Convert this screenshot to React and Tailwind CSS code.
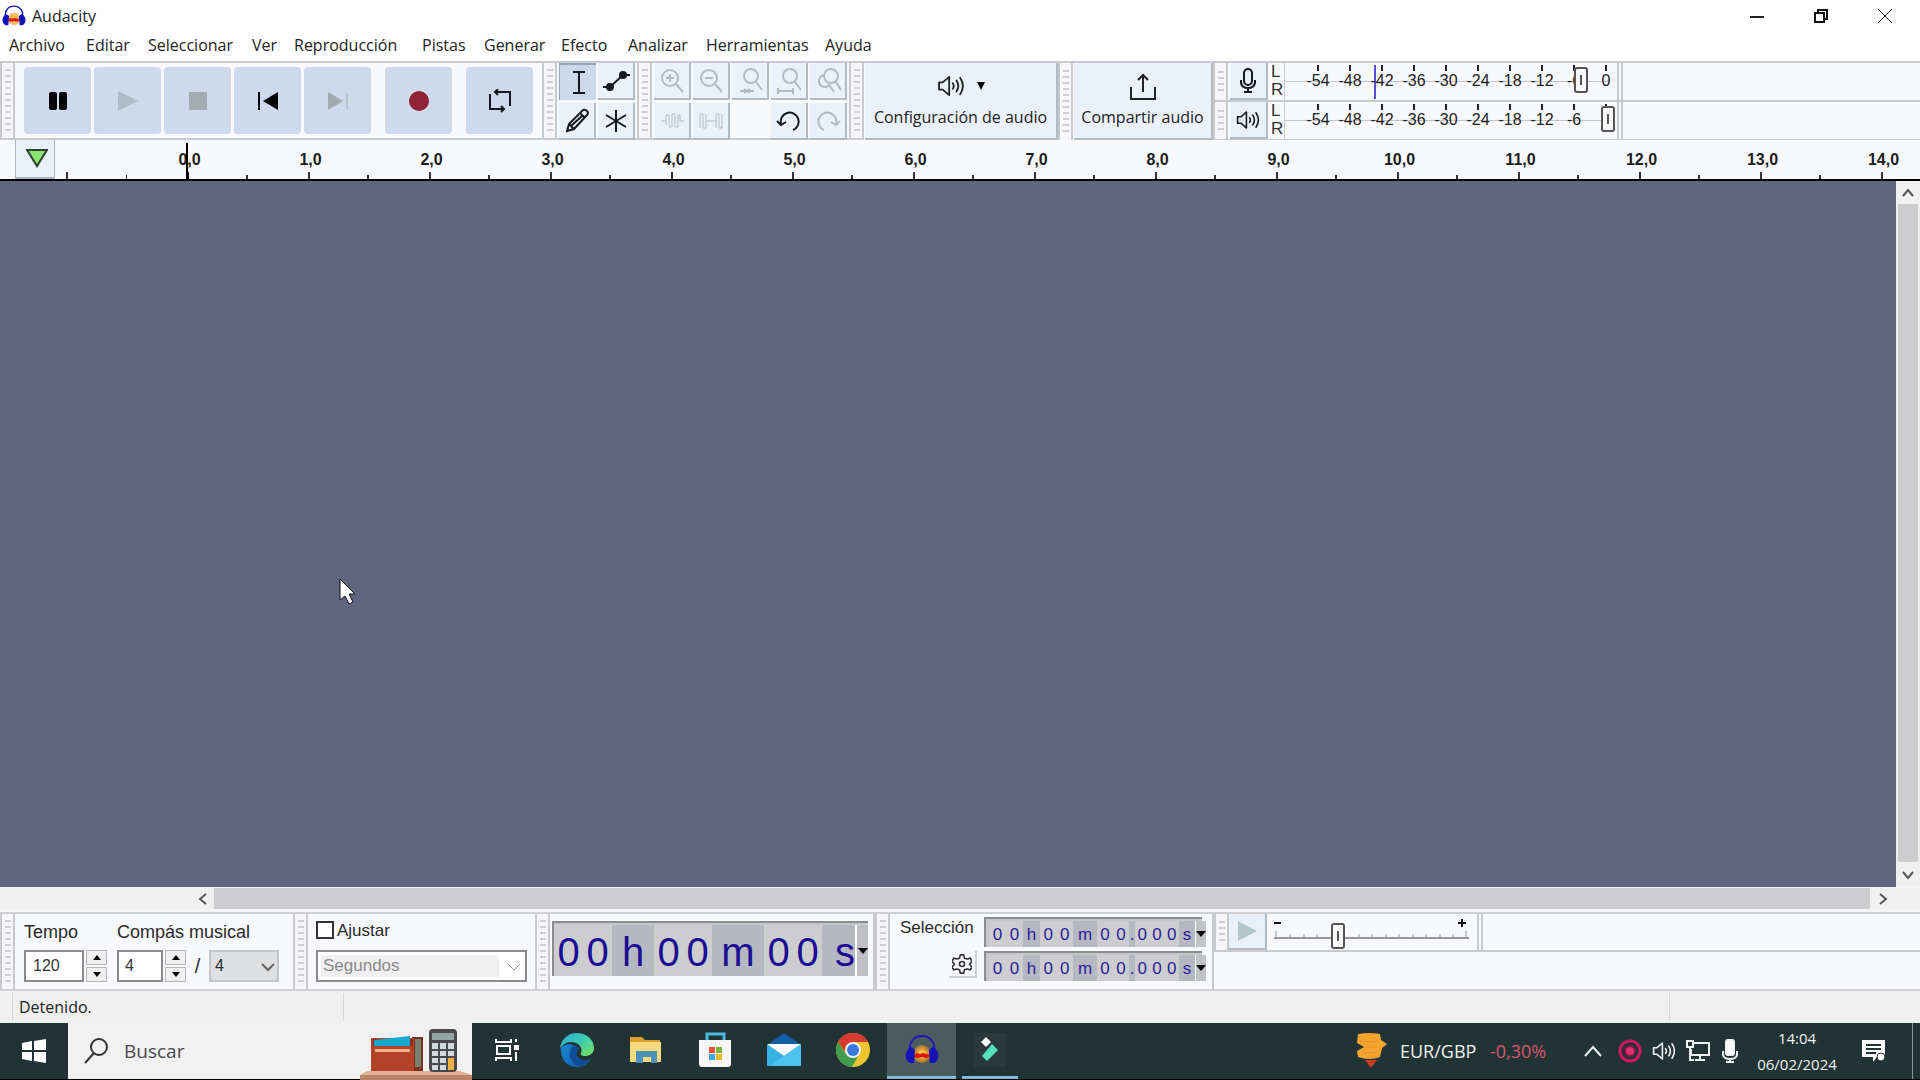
const SANS = "font-['Open_Sans','Noto_Sans',sans-serif]";

function Grip({ short }) {
  return (
    <div className="flex w-[15px] shrink-0 items-center justify-center self-stretch border-x-2 border-[#c9cacd] bg-[#f6f6f8]">
      <svg className={short ? "h-[26px] w-[6px]" : "h-[68px] w-[6px]"} aria-hidden="true">
        <defs>
          <pattern id={short ? "gs" : "gl"} width="6" height="6" patternUnits="userSpaceOnUse">
            <rect y="2" width="6" height="2" fill="#cfcfd2" />
          </pattern>
        </defs>
        <rect width="6" height="68" fill={short ? "url(#gs)" : "url(#gl)"} />
      </svg>
    </div>
  );
}

function Headphones({ className }) {
  return (
    <svg viewBox="0 0 34 32" className={className} aria-hidden="true">
      <defs>
        <radialGradient id="glow"><stop offset=".3" stopColor="#fbc23a" /><stop offset="1" stopColor="#f08a1c" stopOpacity=".5" /></radialGradient>
      </defs>
      <ellipse cx="17" cy="20" rx="9" ry="9" fill="url(#glow)" />
      <path d="M9 21l3-2 3 1 3-1 4 1 3 1v2l-4 1-4-1-4 1-4-1z" fill="#e3130d" />
      <path d="M5 20C3 8 9 2 17 2s14 6 12 18" fill="none" stroke="#1b1ab8" strokeWidth="2" />
      <path d="M6 13c-7 4-7 13-1 16h4l1-13z" fill="#1512b8" />
      <path d="M28 13c7 4 7 13 1 16h-4l-1-13z" fill="#1512b8" />
    </svg>
  );
}

function Speaker({ className }) {
  return (
    <svg viewBox="0 0 30 24" className={className} fill="none" stroke="currentColor" strokeWidth="2" strokeLinejoin="round" aria-hidden="true">
      <path d="M2 8h4l7-6v20l-7-6H2z" />
      <path d="M17 9q2 3 0 6M21 6q4 6 0 12M25 3q6 9 0 18" strokeLinecap="round" />
    </svg>
  );
}

const menus = [
  ["Archivo", "w-[77px]"], ["Editar", "w-[62px]"], ["Seleccionar", "w-[104px]"], ["Ver", "w-[42px]"],
  ["Reproducción", "w-[128px]"], ["Pistas", "w-[62px]"], ["Generar", "w-[77px]"], ["Efecto", "w-[67px]"],
  ["Analizar", "w-[78px]"], ["Herramientas", "w-[119px]"], ["Ayuda", "w-[60px]"],
];

function TitleBar() {
  return (
    <header className="flex h-8 items-center pl-[2px]">
      <Headphones className="h-6 w-6" />
      <h1 className="ml-[6px] text-base leading-5 text-[#222]">Audacity</h1>
      <div className="mr-[3px] ml-auto flex">
        <button aria-label="Minimizar" className="flex h-7 w-16 items-center justify-center">
          <svg width="16" height="16" stroke="#222" strokeWidth="2"><path d="M1 9h14" /></svg>
        </button>
        <button aria-label="Restaurar" className="flex h-7 w-16 items-center justify-center">
          <svg width="16" height="16" fill="none" stroke="#111" strokeWidth="2"><path d="M2 5h9v9H2zM5 5V2h9v9h-3" /></svg>
        </button>
        <button aria-label="Cerrar" className="flex h-7 w-16 items-center justify-center">
          <svg width="16" height="16" stroke="#222" strokeWidth="1"><path d="M1 1l14 14M15 1L1 15" /></svg>
        </button>
      </div>
    </header>
  );
}

function BigButton({ label, children, className = "" }) {
  return (
    <button aria-label={label} className={"flex h-[67px] w-[67px] shrink-0 items-center justify-center rounded bg-[#ced9eb] " + className}>
      <svg width="24" height="24" viewBox="0 0 24 24" aria-hidden="true">{children}</svg>
    </button>
  );
}

function Transport() {
  return (
    <div className="flex items-start gap-[3px] pt-1 pl-[9px] pr-[9px]">
      <BigButton label="Pausa"><rect x="3" y="3" width="8" height="18" rx="2" fill="#05060a" /><rect x="13" y="3" width="8" height="18" rx="2" fill="#05060a" /></BigButton>
      <BigButton label="Reproducir"><path d="M2 2l20 10L2 22z" fill="#aebbc9" /></BigButton>
      <BigButton label="Detener"><rect x="3" y="3" width="18" height="18" fill="#a3acb3" /></BigButton>
      <BigButton label="Ir al inicio"><path d="M3 3v18" stroke="#05060a" strokeWidth="2" /><path d="M22 3v18L7 12z" fill="#05060a" /></BigButton>
      <BigButton label="Ir al final"><path d="M21 4v16" stroke="#a3acb3" strokeWidth="1" /><path d="M2 3v18l15-9z" fill="#a0a9b0" /></BigButton>
      <BigButton label="Grabar" className="ml-[11px]"><circle cx="12" cy="12" r="10" fill="#8f2434" /></BigButton>
      <BigButton label="Bucle" className="ml-[11px]">
        <path d="M2 5v15h14M22 17V3H8M10 0L7 3l3 3M13 17l3 3-3 3" fill="none" stroke="#15181f" strokeWidth="2" />
      </BigButton>
    </div>
  );
}

function Tool({ label, active, dim, children }) {
  return (
    <button aria-label={label} className={(active ? "bg-[#cbd9ea] border-t-2 border-l border-[#9aa6b8] " : "bg-[#ebf1fb] border-b-2 border-r-2 border-[#b4bac4] ") + (dim ? "text-[#b3bac4] " : "text-[#15181f] ") + "flex h-[37px] w-[37px] items-center justify-center"}>
      <svg width="28" height="28" viewBox="0 0 28 28" fill="none" stroke="currentColor" strokeWidth="2" aria-hidden="true">{children}</svg>
    </button>
  );
}

function Tools() {
  return (
    <div className="grid grid-cols-2 content-start gap-x-[2px] gap-y-[3px] px-[2px]">
      <Tool label="Selección" active><path d="M9 3h12M9 24h12M15 3v21" /></Tool>
      <Tool label="Envolvente"><path d="M1 20h7L21 8h7" /><circle cx="8" cy="20" r="3" fill="currentColor" /><circle cx="21" cy="8" r="3" fill="currentColor" /></Tool>
      <Tool label="Dibujo"><path d="M4 24l2-7L20 3q2-1 4 1t0 4L11 22zM17 6l5 5M6 17l5 5M8 19L20 8" /></Tool>
      <Tool label="Multiherramienta"><path d="M14 3v22M4 8l20 12M24 8L4 20" /></Tool>
    </div>
  );
}

function EditTools() {
  return (
    <div className="grid grid-cols-5 content-start gap-x-[2px] gap-y-[3px] px-[2px]">
      <Tool label="Acercar" dim><circle cx="12" cy="11" r="8" /><path d="M18 17l7 8M8 11h8M12 7v8" /></Tool>
      <Tool label="Alejar" dim><circle cx="12" cy="11" r="8" /><path d="M18 17l7 8M8 11h8" /></Tool>
      <Tool label="Ajustar selección" dim><circle cx="15" cy="9" r="7" /><path d="M20 15l6 8M4 24h6M12 24h6M8 22l3 2-3 2M14 22l-3 2 3 2" /></Tool>
      <Tool label="Ajustar proyecto" dim><circle cx="15" cy="9" r="7" /><path d="M20 15l6 8M3 24h15M3 21v6M18 21v6" /></Tool>
      <Tool label="Alternar zoom" dim><circle cx="17" cy="9" r="7" /><path d="M22 15l5 8M10 8a6 6 0 1 0 6 9M15 18l5 7" /></Tool>
      <Tool label="Recortar" dim><path d="M3 14h5M8 18V8h3v12h3V7h3v13h3V8M20 8h2v6h4" strokeWidth="1" /></Tool>
      <Tool label="Silenciar" dim><path d="M3 7v14M3 7h3v14h3V7M9 14h10M19 21V7h3v14h3V7" strokeWidth="1" /></Tool>
      <span />
      <Tool label="Deshacer"><path d="M6 17a9 9 0 1 1 12 6M2 14l4 4 5-3" /></Tool>
      <Tool label="Rehacer" dim><path d="M22 17a9 9 0 1 0-12 6M26 14l-4 4-5-3" /></Tool>
    </div>
  );
}

const dbs = ["-54", "-48", "-42", "-36", "-30", "-24", "-18", "-12", "-6", "0"];

function Meter({ label, icon, level, value }) {
  return (
    <div className="flex h-[39px] border-b-2 border-[#c9cacd]">
      <Grip short />
      <button aria-label={label} className="ml-[2px] flex w-[38px] shrink-0 items-center justify-center border-r-2 border-b-2 border-[#b4bac4] bg-[#ebf1fb] text-[#15181f]">{icon}</button>
      <div className="w-4 pl-[3px] text-[17px] leading-[18px] text-[#333]"><div>L</div><div>R</div></div>
      <div className="relative flex w-[333px] border-l border-[#c9cacd] pl-[17px] pt-[2px]">
        <div className="absolute top-[18px] left-0 h-px w-[325px] bg-[#c5c6ca]" />
        {level && <div className="absolute top-[2px] left-[89px] h-[34px] w-[2px] bg-[#5b4bd6]" />}
        {dbs.map((d) => (
          <div key={d} className="relative flex w-8 shrink-0 flex-col items-center text-base leading-5 text-[#222]">
            <span className="h-[6px] w-[2px] bg-[#222]" />
            <span>{d}</span>
          </div>
        ))}
        <input type="range" aria-label={label} min="0" max="100" defaultValue={value} className="absolute top-[4px] left-4 h-[26px] w-[314px] appearance-none bg-transparent [&::-webkit-slider-thumb]:h-[26px] [&::-webkit-slider-thumb]:w-[14px] [&::-webkit-slider-thumb]:appearance-none [&::-webkit-slider-thumb]:rounded-[3px] [&::-webkit-slider-thumb]:border-2 [&::-webkit-slider-thumb]:border-[#555] [&::-webkit-slider-thumb]:bg-[linear-gradient(#555,#555)] [&::-webkit-slider-thumb]:bg-[length:2px_10px] [&::-webkit-slider-thumb]:bg-center [&::-webkit-slider-thumb]:bg-no-repeat [&::-webkit-slider-thumb]:bg-[#fafafa]" />
      </div>
      <div className="w-[6px] border-x-2 border-[#c9cacd]" />
    </div>
  );
}

function Ruler() {
  const labels = Array.from({ length: 15 }, (_, i) => i + ",0");
  return (
    <div className="flex h-[41px] border-b-2 border-black bg-[#f7f9fd]">
      <button aria-label="Opciones de la línea de tiempo" className="ml-[15px] flex w-[40px] shrink-0 items-center justify-center border-x border-b-2 border-[#aeb6c2] bg-[#e8f0fa] pl-1 pb-[2px]">
        <svg width="22" height="20"><path d="M1 2h20L11 18z" fill="#8be36f" stroke="#2d4230" strokeWidth="2" /></svg>
      </button>
      <div className="relative flex min-w-0 grow items-end overflow-hidden">
        <div className="flex w-[72px] shrink-0 items-end pl-[11px]">
          <i className="h-[7px] w-[2px] bg-[#333]" /><i className="ml-[58px] h-1 w-[2px] bg-[#333]" />
        </div>
        {labels.map((l, i) => (
          <div key={l} className="flex w-[121px] shrink-0 flex-col items-center">
            <span className="pl-1 text-base leading-6 font-bold text-[#1c1c1c]">{l}</span>
            <div className="flex w-full items-end">
              <span className="w-[60px]" />
              <i className={i === 0 ? "h-[7px] w-[2px] bg-black" : "h-[7px] w-[2px] bg-[#333]"} />
              <span className="grow" />
              <i className="h-1 w-[2px] bg-[#333]" />
            </div>
          </div>
        ))}
        <div className="absolute top-[3px] left-[131px] h-9 w-[2px] bg-black" />
      </div>
    </div>
  );
}

function Arrow({ d, label, className }) {
  return (
    <button aria-label={label} className={"flex shrink-0 items-center justify-center " + className}>
      <svg width="14" height="14" fill="none" stroke="#555" strokeWidth="2"><path d={d} /></svg>
    </button>
  );
}

function Spin({ label }) {
  return (
    <div className="ml-[2px] flex flex-col gap-[2px]">
      <button aria-label={"Aumentar " + label} className="flex h-[15px] w-[21px] items-center justify-center border border-[#b5b5b8] bg-[#f0f0f0]"><svg width="8" height="5"><path d="M0 5l4-5 4 5z" /></svg></button>
      <button aria-label={"Reducir " + label} className="flex h-[15px] w-[21px] items-center justify-center border border-[#b5b5b8] bg-[#f0f0f0]"><svg width="8" height="5"><path d="M0 0h8L4 5z" /></svg></button>
    </div>
  );
}

function Caret({ className }) {
  return <svg width="10" height="6" className={className} aria-hidden="true"><path d="M0 0h10L5 6z" /></svg>;
}

const selCells = [["00", "w-[34px]"], ["h", "w-[17px]"], ["00", "w-[33px]"], ["m", "w-[24px]"], ["00", "w-[32px]"], [".", "w-[6px]"], ["000", "w-[44px]"], ["s", "w-[16px]"]];

function SelTime({ label }) {
  return (
    <div role="group" aria-label={label} className="flex h-[30px] w-[218px] border-t-2 border-l-2 border-[#8c8d90] bg-[#c6c7ca] pt-[2px] pl-[3px] text-[17px] leading-7 text-[#2a1d9c]">
      {selCells.map(([t, w], i) => (
        <div key={i} className={w + " flex shrink-0 justify-around overflow-hidden " + (i % 2 ? "bg-[#b5b8c0]" : "bg-[#cdcdd0]")}>
          {t.split("").map((c, j) => <span key={j}>{c}</span>)}
        </div>
      ))}
      <button aria-label={"Formato " + label} className="flex grow items-center justify-center border-l border-white bg-[#c2c3c6]"><Caret /></button>
    </div>
  );
}

const bigCells = [["00", "w-[58px]"], ["h", "w-[42px]"], ["00", "w-[58px]"], ["m", "w-[52px]"], ["00", "w-[58px]"], ["s", "w-[33px]"]];

function BottomBar() {
  return (
    <section className="flex h-[79px] border-t-2 border-b-2 border-[#cfd0d4] bg-[#f7f9fd] text-[#2a2a2a]">
      <Grip />
      <div className="flex w-[278px] gap-[10px] pt-[6px] pl-[9px]">
        <div>
          <label htmlFor="tempo" className="block h-[30px] text-lg leading-6">Tempo</label>
          <div className="flex">
            <input id="tempo" defaultValue="120" className="h-8 w-[60px] border-2 border-[#8b8b8e] bg-white pl-[7px] text-base text-[#333]" />
            <Spin label="tempo" />
          </div>
        </div>
        <div>
          <label htmlFor="compas" className="block h-[30px] text-lg leading-6 whitespace-nowrap">Compás musical</label>
          <div className="flex">
            <input id="compas" defaultValue="4" className="h-8 w-[46px] border-2 border-[#8b8b8e] bg-white pl-[6px] text-base text-[#333]" />
            <Spin label="compás" />
            <span className="w-[23px] text-center text-[20px] leading-8">/</span>
            <span className="relative">
              <select aria-label="Denominador" className="h-8 w-[70px] appearance-none border-2 border-[#c5c6c9] bg-[#dfe0e2] pl-1 text-base"><option>4</option></select>
              <svg width="14" height="14" className="pointer-events-none absolute top-[10px] right-1" fill="none" stroke="#666" strokeWidth="2"><path d="M1 4l6 6 6-6" /></svg>
            </span>
          </div>
        </div>
      </div>
      <Grip />
      <div className="w-[227px] pt-[7px] pl-[8px]">
        <label className="flex h-[29px] items-start gap-[3px] text-[17px] leading-5">
          <input type="checkbox" className="h-[18px] w-[18px] appearance-none border-2 border-[#333] bg-white" />Ajustar
        </label>
        <span className="relative block w-[211px]">
          <select aria-label="Ajustar a" disabled className="h-8 w-full appearance-none border-2 border-[#8b8b8e] bg-white bg-[linear-gradient(#f0f0f0,#f0f0f0)] bg-[length:178px_22px] bg-[3px_3px] bg-no-repeat pl-[5px] text-[17px] text-[#8a8a8d] opacity-100"><option>Segundos</option></select>
          <svg width="14" height="14" className="pointer-events-none absolute top-[10px] right-[6px]" fill="none" stroke="#999" strokeWidth="1"><path d="M1 4l6 6 6-6" /></svg>
        </span>
      </div>
      <Grip />
      <div className="w-[325px] border-r-2 border-[#c9cacd] pt-[7px] pl-[2px]">
        <div role="group" aria-label="Tiempo" className="flex h-[55px] w-[316px] border-t-2 border-l-2 border-[#8c8d90] bg-[#c6c7ca] pt-[2px] text-[40px] leading-[54px] text-[#1b0d96]">
          {bigCells.map(([t, w], i) => (
            <div key={i} className={w + " flex shrink-0 overflow-hidden " + (t === "s" ? "justify-end " : "justify-around ") + (i % 2 ? "bg-[#b5b8c0]" : "bg-[#cdcdd0]")}>
              {t.split("").map((c, j) => <span key={j}>{c}</span>)}
            </div>
          ))}
          <button aria-label="Formato de tiempo" className="flex grow items-center justify-center border-l-2 border-white bg-[#bdbfc4]"><Caret className="shrink-0" /></button>
        </div>
      </div>
      <Grip />
      <div className="flex w-[324px] border-r-2 border-[#c9cacd] pl-[10px]">
        <div className="flex w-[84px] flex-col pr-[7px]">
          <span className="pt-[2px] text-[17px] leading-6">Selección</span>
          <button aria-label="Opciones de selección" className="mt-[11px] flex h-[27px] w-[28px] items-center justify-center self-end border-r-2 border-b-2 border-[#cdd0d6]">
            <svg width="20" height="20" viewBox="0 0 24 24" fill="none" stroke="#333" strokeWidth="2" strokeLinejoin="round"><path d="M9 5l1-4h4l1 4 3 1 4-1 2 4-3 3 3 4-2 3-4-1-3 1-1 4h-4l-1-4-3-1-4 1-2-3 3-4-3-3 2-4 4 1z" /><circle cx="12" cy="12" r="3" /></svg>
          </button>
        </div>
        <div className="flex flex-col gap-1 pt-[3px]"><SelTime label="inicio" /><SelTime label="fin" /></div>
      </div>
      <div className="flex min-w-0 grow flex-col">
        <div className="flex h-[38px] border-b-2 border-[#c9cacd]">
          <Grip short />
          <button aria-label="Reproducir a velocidad" className="flex w-[38px] items-center justify-center border-r-2 border-b-2 border-[#b4bac4] bg-[#e8f1f9]"><svg width="20" height="20"><path d="M1 0l19 10L1 20z" fill="#b3c7ca" /></svg></button>
          <div className="relative w-[212px] border-r-2 border-[#c9cacd]">
            <svg width="198" height="36" className="ml-[6px]" stroke="#98989b" strokeWidth="2" aria-hidden="true">
              <path d="M1 24h195" />
              <path d="M3 17v7M17 20v4M31 20v4M44 20v4M86 20v4M99 20v4M113 20v4M126 20v4M140 20v4M153 20v4M167 20v4M180 20v4M193 17v7" strokeWidth="1" />
              <path d="M1 9h7M185 9h8M189 5v8" stroke="#111" />
            </svg>
            <input type="range" aria-label="Velocidad" defaultValue="32" className="absolute top-[9px] left-[6px] h-[26px] w-[196px] appearance-none bg-transparent [&::-webkit-slider-thumb]:h-[26px] [&::-webkit-slider-thumb]:w-[14px] [&::-webkit-slider-thumb]:appearance-none [&::-webkit-slider-thumb]:rounded-[3px] [&::-webkit-slider-thumb]:border-2 [&::-webkit-slider-thumb]:border-[#555] [&::-webkit-slider-thumb]:bg-[linear-gradient(#555,#555)] [&::-webkit-slider-thumb]:bg-[length:2px_10px] [&::-webkit-slider-thumb]:bg-center [&::-webkit-slider-thumb]:bg-no-repeat [&::-webkit-slider-thumb]:bg-[#fafafa]" />
          </div>
          <div className="w-[4px] border-r-2 border-[#c9cacd]" />
        </div>
      </div>
    </section>
  );
}

function TaskIcon({ label, active, running, className = "w-[69px]", children }) {
  return (
    <button aria-label={label} className={"flex h-full shrink-0 items-center justify-center border-b-[3px] " + (active ? "border-[#86b6d8] bg-[#4a5c5f] " : running ? "border-[#86b6d8] " : "border-transparent ") + className}>
      {children}
    </button>
  );
}

function Taskbar() {
  return (
    <footer className={"flex h-[57px] items-stretch border-b border-black bg-[#223335] text-[#eef2f2] " + SANS}>
      <button aria-label="Inicio" className="flex w-[68px] shrink-0 items-center justify-center">
        <svg width="24" height="24" fill="#fff"><path d="M0 4l10-2v9H0zM12 2l12-2v11H12zM0 13h10v9L0 20zM12 13h12v11l-12-2z" /></svg>
      </button>
      <label className="flex w-[404px] shrink-0 items-center bg-[#f1f1f1]">
        <svg width="24" height="26" className="ml-4" fill="none" stroke="#333" strokeWidth="2"><circle cx="15" cy="9" r="8" /><path d="M10 15L1 25" /></svg>
        <input aria-label="Buscar" placeholder="Buscar" className="ml-4 w-[236px] min-w-0 bg-transparent text-[19px] placeholder:text-[#4a4a4a]" />
        <svg width="112" height="57" className="shrink-0">
          <path d="M7 48h93l12 4v5H0v-5z" fill="#e3b294" /><path d="M0 52h112v5H0z" fill="#b98467" />
          <path d="M52 14h11v34H52z" fill="#7a3024" /><path d="M55 16h6v28h-6z" fill="#76806c" />
          <path d="M11 15h43v33H11z" fill="#b24328" /><path d="M13 16h40v7H13z" fill="#8e2e1e" /><path d="M14 17l36-4v10H14z" fill="#19a8d0" /><path d="M15 26h35v3H15z" fill="#edb489" />
          <rect x="69" y="6" width="28" height="43" rx="4" fill="#4a4a4e" /><path d="M72 10h22v7H72z" fill="#93a3a0" />
          <path d="M72 20h6v6h-6zM80 20h6v6h-6zM88 20h6v6h-6zM72 28h6v5h-6zM80 28h6v5h-6zM88 28h6v5h-6zM72 35h6v5h-6zM80 35h6v5h-6zM72 42h6v5h-6zM80 42h6v5h-6z" fill="#d3dad9" /><path d="M88 35h6v12h-6z" fill="#eeb040" />
        </svg>
      </label>
      <TaskIcon label="Vista de tareas" className="w-[70px]">
        <svg width="24" height="24" fill="none" stroke="#fff" strokeWidth="2"><path d="M1 1v3h15V1M1 23v-3h15v3M2 8h13v8H2zM21 1v3M21 14v9" /><path d="M19 7h5v5h-5z" fill="#fff" stroke="none" /></svg>
      </TaskIcon>
      <TaskIcon label="Edge">
        <svg width="34" height="34" viewBox="0 0 34 34">
          <defs>
            <linearGradient id="edgeTop" x1="0" y1="0" x2="1" y2="1"><stop offset="0" stopColor="#2aa7d8" /><stop offset=".5" stopColor="#3fcbb0" /><stop offset="1" stopColor="#7be35a" /></linearGradient>
            <linearGradient id="edgeBase" x1="0" y1="0" x2="1" y2="1"><stop offset="0" stopColor="#1a85d0" /><stop offset="1" stopColor="#0f5fae" /></linearGradient>
          </defs>
          <path d="M1 15C0 26 7 34 17 34c6 0 11-3 14-8-4 2-8 2-11 0-4-2-5-6-2-10-3-6-13-6-17-1z" fill="url(#edgeBase)" />
          <path d="M12 13c-4 6-3 15 5 20 6 1 11-2 14-7-5 2-9 2-12-1-3-2-3-6 0-9-1-3-4-4-7-3z" fill="#124e96" />
          <path d="M0 16C1 6 8 0 17 0c10 0 17 7 17 15 0 6-5 8-9 8-3 0-5-1-4-3 2-5-2-11-10-11-5 0-9 3-11 7z" fill="url(#edgeTop)" />
        </svg>
      </TaskIcon>
      <TaskIcon label="Explorador">
        <svg width="32" height="28"><path d="M0 1h12l3 3h15v6H0z" fill="#d99f28" /><path d="M0 6h31v20H0z" fill="#f6da80" /><path d="M6 27V15h21v12h-6v-6h-8v6z" fill="#4b91b8" /></svg>
      </TaskIcon>
      <TaskIcon label="Tienda">
        <svg width="34" height="36"><path d="M9 8V2h17v6" fill="none" stroke="#49b9df" strokeWidth="3" /><path d="M1 8h32v24q0 3-3 3H4q-3 0-3-3z" fill="#f6f6f6" /><path fill="#e55338" d="M11 15h6v6h-6z" /><path fill="#79b23a" d="M18 15h6v6h-6z" /><path fill="#3ca6d8" d="M11 22h6v6h-6z" /><path fill="#eab62e" d="M18 22h6v6h-6z" /></svg>
      </TaskIcon>
      <TaskIcon label="Correo">
        <svg width="34" height="34"><path d="M0 12L17 0l17 12v5H0z" fill="#125da6" /><path d="M1 11h32v14H1z" fill="#f7fafc" /><path d="M0 11l17 12 17-12v22H0z" fill="#36b1e2" /><path d="M34 11v22H3l14-10z" fill="#4cc3ee" /></svg>
      </TaskIcon>
      <TaskIcon label="Chrome">
        <svg width="34" height="34" viewBox="0 0 34 34"><circle cx="17" cy="17" r="17" fill="#f0c62e" /><path d="M2 9a17 17 0 0 1 30 0H17l-8 10z" fill="#d63a30" /><path d="M2 9a17 17 0 0 0 14 25l8-14-7 4-8-4z" fill="#3f9d4d" /><circle cx="17" cy="17" r="8" fill="#f3f3f0" /><circle cx="17" cy="17" r="6" fill="#3978de" /></svg>
      </TaskIcon>
      <TaskIcon label="Audacity" active><Headphones className="h-8 w-[34px]" /></TaskIcon>
      <TaskIcon label="Filmora" running className="ml-[6px] w-[56px]">
        <svg width="32" height="34"><rect width="32" height="34" fill="#2b393d" /><path d="M12 4l5 5-5 5-5-5z" fill="#fff" /><path d="M18 11l6 6-11 11-5-5z" fill="#55e3bd" /></svg>
      </TaskIcon>
      <div className="ml-auto flex shrink-0 items-center">
        <button className="flex items-center text-lg">
          <svg width="34" height="38" className="mr-3"><path d="M11 28h12l-6 8z" fill="#c73d26" /><path d="M4 2q12-2 22 0l1 6 6 4-5 4-2 9q-10 4-22 0l-1-6 7-4-7-4z" fill="#f3a52e" /><path d="M6 9q9 2 18 0M12 15h12M7 20q8 2 16 0" fill="none" stroke="#e0912a" strokeWidth="1" /></svg>
          <span className="w-[90px] text-left">EUR/GBP</span><span className="w-[69px] text-left text-[#d4586b]">-0,30%</span>
        </button>
        <button aria-label="Iconos ocultos" className="ml-[25px] w-[34px]"><svg width="18" height="12" fill="none" stroke="#eef2f2" strokeWidth="2"><path d="M1 11l8-9 8 9" /></svg></button>
        <button aria-label="Grabación" className="w-[34px]"><svg width="24" height="26"><circle cx="12" cy="13" r="10" fill="none" stroke="#cc1a5a" strokeWidth="3" /><circle cx="12" cy="13" r="6" fill="#7c1a44" /><circle cx="12" cy="13" r="4" fill="#e0306d" /></svg></button>
        <button aria-label="Volumen" className="w-[34px]"><Speaker className="h-5 w-6" /></button>
        <button aria-label="Red" className="w-[36px]"><svg width="24" height="22" fill="none" stroke="#eef2f2" strokeWidth="2"><path d="M8 3h15v12H5V9M1 1h6v6H1zM4 7v13h4M14 15v5M9 20h10" /></svg></button>
        <button aria-label="Micrófono" className="w-[28px]"><svg width="16" height="24" fill="none" stroke="#eef2f2" strokeWidth="2"><rect x="4" y="1" width="8" height="15" rx="2" fill="#fff" /><path d="M1 12v4q1 4 7 4t7-4v-4M8 20v3M4 23h8" /></svg></button>
        <button className="w-[94px] text-center text-[15px] leading-[26px]"><span className="block">14:04</span><span className="block">06/02/2024</span></button>
        <button aria-label="Notificaciones" className="ml-[18px] w-[50px]"><svg width="24" height="24"><path d="M0 1h23v17h-8l-4 5v-5H0z" fill="#fff" /><path d="M4 6h15M4 10h15M4 14h10" stroke="#223335" strokeWidth="2" /><circle cx="19" cy="18" r="4" fill="#fff" stroke="#223335" /></svg></button>
        <div className="h-full w-2 border-l border-[#8b9697]" />
      </div>
    </footer>
  );
}

export default function App() {
  return (
    <div className={"flex min-h-screen w-full flex-col overflow-hidden bg-white font-['Liberation_Sans',Arial,sans-serif] text-[#222]"}>
      <div className={SANS}>
        <TitleBar />
        <nav className="flex h-[29px] items-center pl-[9px] text-base leading-6">
          {menus.map(([m, w]) => <button key={m} className={w + " pb-1 text-left whitespace-nowrap"}>{m}</button>)}
        </nav>
      </div>
      <section className="flex h-[79px] border-t-2 border-[#c9cacd] bg-[#f7f9fd]">
        <div className="flex border-b-2 border-[#c9cacd]"><Grip /><Transport /><Grip /><Tools /><Grip /><EditTools /><Grip /></div>
        <button className={"ml-[1px] flex w-[193px] shrink-0 flex-col items-center border-r-2 border-b-2 border-[#b4bac4] bg-[#ebf1fb] pt-3 text-base " + SANS}>
          <span className="flex items-center gap-3"><Speaker className="h-[22px] w-7" /><svg width="8" height="8"><path d="M0 0h8L4 8z" /></svg></span>
          <span className="mt-2 leading-6 whitespace-nowrap">Configuración de audio</span>
        </button>
        <Grip />
        <button className={"ml-[1px] flex w-[139px] shrink-0 flex-col items-center border-r-2 border-b-2 border-[#b4bac4] bg-[#ebf1fb] pt-[10px] text-base " + SANS}>
          <svg width="28" height="28" fill="none" stroke="#222" strokeWidth="2"><path d="M2 14v12h24V14M14 19V2M9 7l5-5 5 5" /></svg>
          <span className="mt-[4px] leading-6 whitespace-nowrap">Compartir audio</span>
        </button>
        <div className="grow">
          <Meter label="Nivel de grabación" value={91} level icon={<svg width="18" height="26" fill="none" stroke="currentColor" strokeWidth="2"><rect x="5" y="1" width="8" height="16" rx="4" /><path d="M2 12v3q1 5 7 5t7-5v-3M9 20v4M5 24h8" /></svg>} />
          <Meter label="Nivel de reproducción" value={100} icon={<Speaker className="h-5 w-6" />} />
        </div>
      </section>
      <Ruler />
      <main className="flex min-h-0 grow">
        <div className="relative grow bg-[#5f667f]">
          <svg width="18" height="28" className="absolute top-[397px] left-[339px]"><path d="M1 1v21l5-4 4 8 4-2-4-8h6z" fill="#fff" stroke="#111" /></svg>
        </div>
        <div className="flex w-6 shrink-0 flex-col border-x-2 border-[#f0f0f0] bg-[#f0f0f0]">
          <Arrow label="Subir" d="M2 10l5-6 5 6" className="h-[23px]" />
          <div className="grow bg-[#cdcdcf]" />
          <Arrow label="Bajar" d="M2 4l5 6 5-6" className="h-[25px]" />
        </div>
      </main>
      <div className="flex h-[25px] items-stretch border-t border-b-[3px] border-[#f4f5f7] bg-[#f0f0f0] pl-[191px]">
        <Arrow label="Izquierda" d="M10 2L4 7l6 5" className="w-[23px]" />
        <div className="grow bg-[#cdcdcf]" />
        <Arrow label="Derecha" d="M4 2l6 5-6 5" className="mr-6 w-[26px]" />
      </div>
      <BottomBar />
      <div className={"flex h-8 items-center bg-[#f0f0f0] text-base " + SANS}>
        <span className="h-7 w-[13px] border-r border-[#d7d7d7]" />
        <span className="h-7 w-[331px] border-r border-[#d7d7d7] pl-[6px] leading-7">Detenido.</span>
        <span className="ml-auto h-7 w-[251px] border-l border-[#d7d7d7]" />
      </div>
      <Taskbar />
    </div>
  );
}
